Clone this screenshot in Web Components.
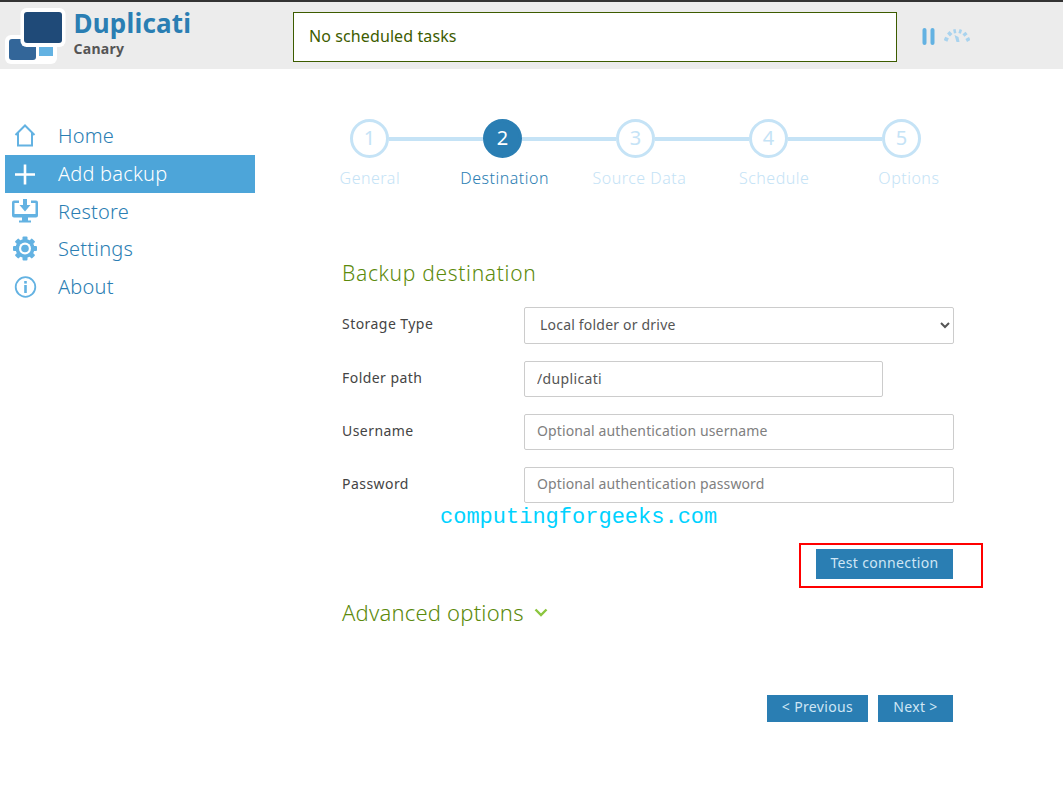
<!DOCTYPE html>
<html>
<head>
<meta charset="utf-8">
<title>Duplicati</title>
<style>
  html, body { margin: 0; padding: 0; background: #fff; }
  body { font-family: "Noto Sans", "Open Sans", sans-serif; height: 786px; overflow: hidden; position: relative; }
</style>
</head>
<body>
<dup-header></dup-header>
<div style="display:flex">
  <dup-nav></dup-nav>
  <dup-main></dup-main>
</div>
<script>
class DupHeader extends HTMLElement {
  constructor() {
    super();
    this.attachShadow({ mode: 'open' });
    this.shadowRoot.innerHTML = `
      <style>
        :host { display: flex; height: 67px; background: #ececec; border-top: 2px solid #333; }
        .logo { width: 293px; display: flex; }
        svg.mark { flex: none; }
        .names { margin-left: 5.5px; }
        .name { font-size: 26px; line-height: 30px; font-weight: 700; color: #2a7eb3; margin-top: 6px; letter-spacing: .2px; }
        .sub { font-size: 14px; line-height: 18px; font-weight: 700; color: #555; margin-top: 2px; letter-spacing: .3px; }
        .status { width: 604px; height: 50px; margin-top: 10px; box-sizing: border-box; background: #fff; border: 1px solid #3d5c00; color: #3d5c00; font-size: 16px; line-height: 46px; padding-left: 15px; letter-spacing: .1px; }
        .tools { display: flex; margin: 26px 0 0 25px; gap: 7px; }
      </style>
      <div class="logo">
        <svg class="mark" width="68" height="67" viewBox="0 2 68 67">
          <rect x="5" y="35" width="52" height="29" rx="6" fill="#fff"/>
          <rect x="39" y="47" width="14" height="9" fill="#63b2e2"/>
          <rect x="9" y="39" width="27" height="21" rx="3" fill="#336699"/>
          <rect x="20.5" y="8" width="45" height="39" rx="6" fill="#fff"/>
          <rect x="24" y="12" width="38" height="31" rx="3" fill="#1f4a78"/>
        </svg>
        <div class="names">
          <div class="name">Duplicati</div>
          <div class="sub">Canary</div>
        </div>
      </div>
      <div class="status">No scheduled tasks</div>
      <div class="tools">
        <svg width="14" height="17" viewBox="0 0 14 17"><rect x="0.5" y="0" width="4" height="17" rx="2" fill="#63b2e2"/><rect x="8.5" y="0" width="4" height="17" rx="2" fill="#63b2e2"/></svg>
        <svg width="26" height="17" viewBox="0 0 26 17" style="margin-left:1px">
          <g stroke="#a9d3ee" stroke-width="4" fill="none">
            <path d="M1.5 13 L3 9.5"/><path d="M4.5 7 L7 4.5"/><path d="M9.5 3.5 L12 3"/><path d="M15 3 L17.5 3.8"/><path d="M20 5 L22 7.5"/><path d="M23.2 10 L24.8 13"/>
          </g>
          <path d="M10.5 7 L14.5 9 L15.5 14 L12.5 14 Z" fill="#a9d3ee"/>
        </svg>
      </div>`;
  }
}
customElements.define('dup-header', DupHeader);

const navIcons = {
  home: '<path d="M3.5 12 L13 2.5 L22.5 12 M6 10 V22.5 H20 V10" fill="none" stroke="#63b2e2" stroke-width="2"/>',
  add: '<path d="M13 3.5 V23.5 M3 13.5 H23" stroke="#fff" stroke-width="2.6" fill="none"/>',
  restore: '<path d="M7 1.5 H2 Q0 1.5 0 3.5 V16.5 Q0 18.5 2 18.5 H24 Q26 18.5 26 16.5 V3.5 Q26 1.5 24 1.5 H19 V4 H23.5 V15 H2.5 V4 H7 Z" fill="#63b2e2"/><path d="M11 0 H15 V6 H18.5 L13 12.5 L7.5 6 H11 Z" fill="#63b2e2"/><path d="M10 18 H16 V21.5 H19 V23.5 H7 V21.5 H10 Z" fill="#63b2e2"/>',
  settings: '<g transform="translate(.5 0)"><g fill="#63b2e2"><circle cx="12.5" cy="12.5" r="9.5"/><rect x="10" y="0.5" width="5" height="24" rx="1"/><rect x="10" y="0.5" width="5" height="24" rx="1" transform="rotate(45 12.5 12.5)"/><rect x="10" y="0.5" width="5" height="24" rx="1" transform="rotate(90 12.5 12.5)"/><rect x="10" y="0.5" width="5" height="24" rx="1" transform="rotate(135 12.5 12.5)"/></g><circle cx="12.5" cy="12.5" r="6" fill="#fff"/><circle cx="12.5" cy="12.5" r="3.8" fill="#63b2e2"/></g>',
  about: '<circle cx="13.5" cy="13" r="9.8" fill="none" stroke="#63b2e2" stroke-width="1.8"/><rect x="12.2" y="11" width="2.6" height="8" fill="#63b2e2"/><rect x="12.2" y="7" width="2.6" height="2.6" fill="#63b2e2"/>'
};

class DupNavItem extends HTMLElement {
  constructor() {
    super();
    this.attachShadow({ mode: 'open' });
  }
  connectedCallback() {
    const icon = this.getAttribute('icon');
    this.shadowRoot.innerHTML = `
      <style>
        :host { display: flex; align-items: center; box-sizing: border-box; height: 38px; padding-bottom: 2px; color: #2a7eb3; font-size: 20px; font-weight: 300; letter-spacing: .2px; }
        :host([active]) { background: #4da5d9; color: #fff; }
        :host([short]) { height: 37px; padding-bottom: 0; }
        svg { display: block; flex: none; margin: 0 20px 0 7px; }
      </style>
      <svg width="26" height="25" viewBox="0 0 26 25">${navIcons[icon]}</svg>
      <slot></slot>`;
  }
}
customElements.define('dup-nav-item', DupNavItem);

class DupNav extends HTMLElement {
  constructor() {
    super();
    this.attachShadow({ mode: 'open' });
    this.shadowRoot.innerHTML = `
      <style>
        :host { display: block; width: 250px; margin: 48px 0 0 5px; flex: none; }
      </style>
      <dup-nav-item icon="home">Home</dup-nav-item>
      <dup-nav-item icon="add" active>Add backup</dup-nav-item>
      <dup-nav-item icon="restore" short>Restore</dup-nav-item>
      <dup-nav-item icon="settings">Settings</dup-nav-item>
      <dup-nav-item icon="about">About</dup-nav-item>`;
  }
}
customElements.define('dup-nav', DupNav);

class DupStepper extends HTMLElement {
  constructor() {
    super();
    this.attachShadow({ mode: 'open' });
    const names = ['General', 'Destination', 'Source Data', 'Schedule', 'Options'];
    const circles = names.map((n, i) =>
      `${i ? '<i></i>' : ''}<b class="${i === 1 ? 'on' : ''}">${i + 1}</b>`).join('');
    const labels = names.map((n, i) => `<span class="${i === 1 ? 'on' : ''}">${n}</span>`).join('');
    this.shadowRoot.innerHTML = `
      <style>
        :host { display: block; }
        .circles { display: flex; align-items: center; margin-left: 95px; height: 39px; }
        b { flex: none; width: 39px; height: 39px; box-sizing: border-box; border: 3px solid #c5e3f6; border-radius: 50%; background: #fff; color: #c5e3f6; font-weight: 400; font-size: 20px; padding-bottom: 2px; display: flex; align-items: center; justify-content: center; }
        b.on { background: #2a7eb3; border-color: #2a7eb3; color: #fff; }
        i { flex: none; width: 94px; height: 4px; background: #c5e3f6; }
        .labels { display: grid; grid-template-columns: repeat(5, 134.75px); margin: 9px 0 0 47.5px; }
        span { text-align: center; font-size: 16px; font-weight: 300; line-height: 22px; color: #c5e3f6; letter-spacing: .5px; }
        span.on { color: #2a7eb3; }
      </style>
      <div class="circles">${circles}</div>
      <div class="labels">${labels}</div>`;
  }
}
customElements.define('dup-stepper', DupStepper);

class DupField extends HTMLElement {
  constructor() {
    super();
    this.attachShadow({ mode: 'open' });
  }
  connectedCallback() {
    const w = this.getAttribute('width') || '430';
    this.shadowRoot.innerHTML = `
      <style>
        :host { display: flex; align-items: center; color: #444; font-size: 14px; letter-spacing: .45px; }
        label { width: 182px; flex: none; position: relative; top: -2px; }
        .box { width: ${w}px; height: 36px; box-sizing: border-box; border: 1px solid #ccc; border-radius: 2px; background: #fff; font: inherit; letter-spacing: .35px; color: #555; padding: 0 12px 2px; outline: none; }
        input:placeholder-shown { padding-bottom: 4px; }
        input::placeholder { color: #808080; opacity: 1; letter-spacing: .13px; }
        select.box { padding: 0 0 2px 11px; height: 37px; letter-spacing: .2px; }
      </style>
      <label>${this.getAttribute('label')}</label>
      <slot></slot>`;
    const value = this.getAttribute('value');
    const ph = this.getAttribute('placeholder');
    const holder = document.createElement('div');
    if (this.hasAttribute('select')) {
      holder.innerHTML = `<select class="box"><option>${value}</option></select>`;
    } else {
      holder.innerHTML = `<input class="box" type="text">`;
      const inp = holder.firstChild;
      if (value) inp.value = value;
      if (ph) inp.placeholder = ph;
    }
    this.shadowRoot.appendChild(holder.firstChild);
  }
}
customElements.define('dup-field', DupField);

class DupButton extends HTMLElement {
  constructor() {
    super();
    this.attachShadow({ mode: 'open' });
    this.shadowRoot.innerHTML = `
      <style>
        :host { display: flex; align-items: center; justify-content: center; box-sizing: border-box; padding-bottom: 4px; background: #2a7eb3; color: #cfe6f5; font-size: 14px; letter-spacing: .35px; }
      </style>
      <slot></slot>`;
  }
}
customElements.define('dup-button', DupButton);

class DupMain extends HTMLElement {
  constructor() {
    super();
    this.attachShadow({ mode: 'open' });
    this.shadowRoot.innerHTML = `
      <style>
        :host { display: block; width: 698px; padding-top: 50px; position: relative; flex: none; }
        .form { margin-left: 87px; width: 612px; }
        h2 { margin: 69px 0 0; font-size: 21px; line-height: 30px; font-weight: 300; color: #5c8a0c; letter-spacing: .68px; }
        dup-field { margin-bottom: 17px; }
        .fields { margin-top: 19px; display: flex; flex-direction: column; }
        .test { display: flex; justify-content: flex-end; margin: 29px 1px 0 0; }
        .test dup-button { width: 137px; height: 30px; }
        .adv { margin-top: 18px; display: flex; align-items: center; gap: 10px; font-size: 22px; font-weight: 300; letter-spacing: .2px; line-height: 30px; color: #5c8a0c; }
        .nav { display: flex; justify-content: flex-end; gap: 10px; margin: 68px 1px 0 0; }
        .prev { width: 101px; height: 27px; }
        .next { width: 75px; height: 27px; }
        .mark { position: absolute; left: 185px; top: 436px; font: 22px/26px "Liberation Mono", monospace; color: #00d2ff; }
        .red { position: absolute; left: 544px; top: 474px; width: 184px; height: 45px; box-sizing: border-box; border: 2px solid #f00; }
      </style>
      <dup-stepper></dup-stepper>
      <div class="form">
        <h2>Backup destination</h2>
        <div class="fields">
          <dup-field label="Storage Type" select value="Local folder or drive"></dup-field>
          <dup-field label="Folder path" value="/duplicati" width="359"></dup-field>
          <dup-field label="Username" placeholder="Optional authentication username"></dup-field>
          <dup-field label="Password" placeholder="Optional authentication password"></dup-field>
        </div>
        <div class="test"><dup-button>Test connection</dup-button></div>
        <div class="adv">Advanced options
          <svg width="14" height="9" viewBox="0 0 14 9"><path d="M1.5 1.5 L7 7 L12.5 1.5" fill="none" stroke="#8cc63f" stroke-width="2.4"/></svg>
        </div>
        <div class="nav">
          <dup-button class="prev">&lt; Previous</dup-button>
          <dup-button class="next">Next &gt;</dup-button>
        </div>
      </div>
      <div class="mark">computingforgeeks.com</div>
      <div class="red"></div>`;
  }
}
customElements.define('dup-main', DupMain);
</script>
</body>
</html>
